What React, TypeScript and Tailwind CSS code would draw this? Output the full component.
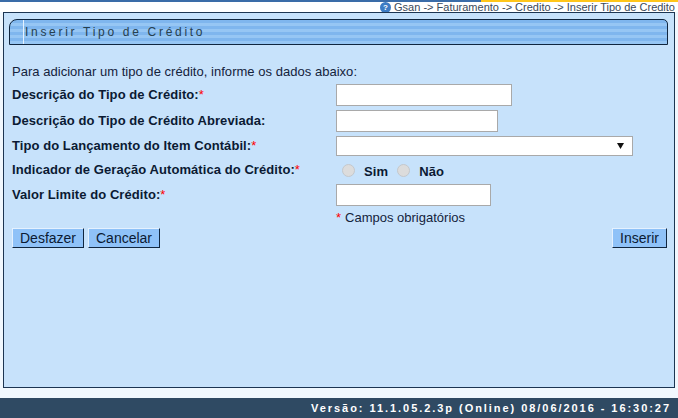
import React from 'react';

const Req = () => <span className="text-[#ff0000] font-normal">*</span>;

const Row = ({ label, required, className, children }: any) => (
    <div className={`flex items-center ${className}`}>
        <div className="w-[324px] shrink-0 text-[13px] font-bold tracking-[0.07px] text-[#0b1a33]">
            {label}:{required && <Req />}
        </div>
        {children}
    </div>
);

const TextInput = ({ className }: any) => (
    <input type="text" className={`bg-white border border-[#a9a9a9] ${className}`} />
);

const Radio = () => (
    <span className="block w-[13px] h-[13px] rounded-full border border-[#c4c8cc] bg-[#dcdcdc]" />
);

const Btn = ({ children, className }: any) => (
    <button type="button" className={`h-[20px] bg-[#8fc2f8] border border-t-[#e4f1ff] border-l-[#e4f1ff] border-r-[#10263f] border-b-[#10263f] text-[14px] text-[#0b1a33] leading-none ${className}`}>
        {children}
    </button>
);

export default function App() {
    return (
        <div className="w-[678px] h-[418px] flex flex-col bg-[#f1f8fe] overflow-hidden font-['Liberation_Sans',Arial,sans-serif]">
            <div className="flex h-[2px] shrink-0">
                <div className="w-[481px] bg-[#3a6ca8]" />
                <div className="flex-1 bg-[#ffc61a]" />
            </div>
            <div className="h-[10px] shrink-0 flex items-center justify-end gap-[3px] pr-[3px] text-[11px] leading-none text-[#3c4a5a] bg-white">
                <span className="block w-[11px] h-[11px] rounded-full bg-[#3d7cc4] text-white text-[8px] font-bold text-center leading-[11px]">?</span>
                <span>Gsan -&gt; Faturamento -&gt; Credito -&gt; Inserir Tipo de Credito</span>
            </div>
            <div className="mx-[3px] h-[376px] shrink-0 flex flex-col border border-[#1c3552] bg-[#c7e2fb] pl-[5px] pr-[5px] pt-[6px]">
                <div className="h-[26px] mr-[1px] shrink-0 flex items-center pl-[15px] border border-[#10263f] rounded-tl-[8px] rounded-tr-[5px] bg-[repeating-linear-gradient(180deg,#7fb6ee_0px,#7fb6ee_3px,#96c6f4_3px,#96c6f4_6px)] text-[12px] tracking-[2.7px] text-[#26404f]">
                    <span className="border-l border-[#e4f1ff] h-full -ml-[2px] mr-[1px]" />
                    Inserir Tipo de Crédito
                </div>
                <div className="flex flex-col pl-[3px] pr-[2px]">
                    <div className="mt-[20px] h-[14px] flex items-center text-[13px] tracking-[0.03px] text-[#14233c]">
                        Para adicionar um tipo de crédito, informe os dados abaixo:
                    </div>
                    <Row label="Descrição do Tipo de Crédito" required className="mt-[5px] h-[22px]">
                        <TextInput className="w-[176px] h-[22px]" />
                    </Row>
                    <Row label="Descrição do Tipo de Crédito Abreviada" className="mt-[4px] h-[22px]">
                        <TextInput className="w-[162px] h-[22px]" />
                    </Row>
                    <Row label="Tipo do Lançamento do Item Contábil" required className="mt-[4px] h-[20px]">
                        <div className="w-[297px] h-[20px] bg-white border border-[#a9a9a9] flex items-center justify-end pr-[8px]">
                            <svg width="7" height="6" viewBox="0 0 7 6"><path d="M0 0h7L3.5 6z" fill="#111" /></svg>
                        </div>
                    </Row>
                    <Row label="Indicador de Geração Automática do Crédito" required className="mt-[4px] h-[20px]">
                        <div className="flex items-center ml-[6px] text-[13px] font-bold tracking-[0.1px] text-[#0b1a33]">
                            <Radio />
                            <span className="ml-[9px] pt-[3px]">Sim</span>
                            <span className="ml-[9px]"><Radio /></span>
                            <span className="ml-[9px] pt-[3px]">Não</span>
                        </div>
                    </Row>
                    <Row label="Valor Limite do Crédito" required className="mt-[4px] h-[22px]">
                        <TextInput className="w-[155px] h-[22px]" />
                    </Row>
                    <div className="mt-[4px] ml-[324px] h-[16px] flex items-center text-[13px] text-[#14233c]">
                        <span className="text-[#ff0000] mr-[4px]">*</span>Campos obrigatórios
                    </div>
                    <div className="mt-[2px] flex items-center">
                        <Btn className="w-[72px]">Desfazer</Btn>
                        <Btn className="w-[72px] ml-[4px]">Cancelar</Btn>
                        <Btn className="w-[55px] ml-auto">Inserir</Btn>
                    </div>
                </div>
            </div>
            <div className="h-[10px] shrink-0" />
            <div className="h-[20px] shrink-0 bg-[#2f4a63] flex items-center justify-end pr-[7px] text-[11px] font-bold tracking-[1.95px] text-white">
                Versão: 11.1.05.2.3p (Online) 08/06/2016 - 16:30:27
            </div>
        </div>
    );
}
